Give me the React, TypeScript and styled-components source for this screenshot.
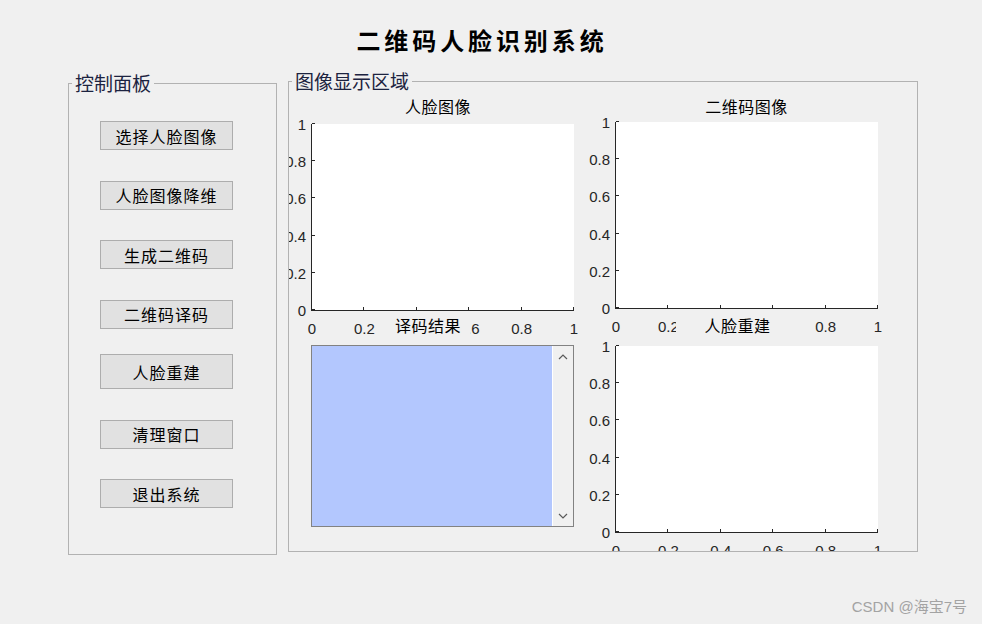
import { Fragment } from "react";
import styled, { createGlobalStyle } from "styled-components";

const GlobalStyle = createGlobalStyle`
  body {
    margin: 0;
    background: #f0f0f0;
  }
`;

const ticks = [0, 0.2, 0.4, 0.6, 0.8, 1];

const buttons = ["选择人脸图像", "人脸图像降维", "生成二维码", "二维码译码", "人脸重建", "清理窗口", "退出系统"];

type ChartProps = {
    title: string;
    gap: number;
    shift?: number;
    padL?: number;
    padR?: number;
    cover?: boolean;
};

const Chart = ({ title, gap, shift = 0, padL = 0, padR = 0, cover = false }: ChartProps) => (
    <Cell>
        <TitleRow>
            <Title $shift={shift} $padL={padL} $padR={padR} $cover={cover}>{title}</Title>
        </TitleRow>
        <Plot $gap={gap}>
            {ticks.map(t => (
                <Fragment key={t}>
                    <TickX style={{ left: `${t * 100}%` }} />
                    <LabelX style={{ left: `${t * 100}%` }}>{t}</LabelX>
                    <TickY style={{ bottom: `${t * 100}%` }} />
                    <LabelY style={{ bottom: `${t * 100}%` }}>{t}</LabelY>
                </Fragment>
            ))}
        </Plot>
    </Cell>
);

const App = () => {
    return (
        <Page>
            <GlobalStyle />
            <Header>二维码人脸识别系统</Header>
            <Main>
                <Panel $w={209} $h={483} $top={2}>
                    <Caption>控制面板</Caption>
                    <ButtonColumn>
                        {buttons.map(b => (
                            <Button key={b} $tall={b === "人脸重建"}>{b}</Button>
                        ))}
                    </ButtonColumn>
                </Panel>
                <Panel $w={630} $h={482}>
                    <Caption>图像显示区域</Caption>
                    <PlotGrid>
                        <Chart title="人脸图像" gap={8} shift={9} />
                        <Chart title="二维码图像" gap={6} />
                        <Cell>
                            <TitleRow>
                                <Title $shift={24} $padL={4} $padR={9} $cover>译码结果</Title>
                            </TitleRow>
                            <ListBox>
                                <ListFill />
                                <ScrollBar>
                                    <svg width="10" height="6" viewBox="0 0 10 6">
                                        <polyline points="1,5 5,1 9,5" fill="none" stroke="#5a5a5a" strokeWidth="1.2" />
                                    </svg>
                                    <svg width="10" height="6" viewBox="0 0 10 6">
                                        <polyline points="1,1 5,5 9,1" fill="none" stroke="#5a5a5a" strokeWidth="1.2" />
                                    </svg>
                                </ScrollBar>
                            </ListBox>
                        </Cell>
                        <Chart title="人脸重建" gap={11} shift={31} padL={28} padR={15} cover />
                    </PlotGrid>
                </Panel>
            </Main>
            <Footer>CSDN @海宝7号</Footer>
        </Page>
    );
};

export default App;

const Page = styled.div`
    width: 982px;
    height: 624px;
    overflow: hidden;
    display: flex;
    flex-direction: column;
    background: #f0f0f0;
`;

const Header = styled.div`
    padding: 23px 18px 0 0;
    height: 34px;
    line-height: 34px;
    text-align: center;
    font-family: "Noto Sans CJK SC", sans-serif;
    font-size: 24px;
    font-weight: 700;
    letter-spacing: 3.9px;
    color: #000;
`;

const Main = styled.div`
    display: flex;
    align-items: flex-start;
    gap: 11px;
    margin-top: 13px;
    padding-left: 68px;
`;

const Panel = styled.fieldset<{ $w: number; $h: number; $top?: number }>`
    box-sizing: border-box;
    width: ${p => p.$w}px;
    height: ${p => p.$h}px;
    min-width: 0;
    margin: ${p => p.$top ?? 0}px 0 0 0;
    padding: 0;
    border: 1px solid #b2b2b2;
`;

const Caption = styled.legend`
    margin-left: 3px;
    padding: 0 3px;
    font-family: "Noto Sans CJK SC", sans-serif;
    font-size: 19px;
    line-height: 22px;
    color: #1c2340;
`;

const ButtonColumn = styled.div`
    display: flex;
    flex-direction: column;
    gap: 30.5px;
    padding: 27px 0 0 31px;
`;

const Button = styled.div<{ $tall: boolean }>`
    box-sizing: border-box;
    width: 133px;
    height: ${p => (p.$tall ? 35 : 29)}px;
    margin-top: ${p => (p.$tall ? -5 : 0)}px;
    display: flex;
    align-items: center;
    justify-content: center;
    background: #e1e1e1;
    border: 1px solid #adadad;
    font-family: "Noto Sans CJK SC", sans-serif;
    font-size: 16px;
    letter-spacing: 1px;
    color: #000;
`;

const PlotGrid = styled.div`
    box-sizing: border-box;
    height: 459px;
    overflow: hidden;
    padding: 4px 0 0 22px;
    display: grid;
    grid-template-columns: 263px 263px;
    grid-template-rows: 219px auto;
    column-gap: 41px;
    align-content: start;
`;

const Cell = styled.div`
    display: flex;
    flex-direction: column;
    width: 263px;
`;

const TitleRow = styled.div`
    display: flex;
    justify-content: center;
    height: 20px;
`;

const Title = styled.div<{ $shift: number; $padL: number; $padR: number; $cover: boolean }>`
    position: relative;
    z-index: 1;
    margin-right: ${p => p.$shift}px;
    padding: 0 ${p => p.$padR}px 0 ${p => p.$padL}px;
    background: ${p => (p.$cover ? "#f0f0f0" : "transparent")};
    font-family: "Noto Sans CJK SC", sans-serif;
    font-size: 16px;
    letter-spacing: 0.5px;
    line-height: 20px;
    white-space: nowrap;
    color: #000;
`;

const Plot = styled.div<{ $gap: number }>`
    position: relative;
    box-sizing: border-box;
    width: 263px;
    height: 187px;
    margin-top: ${p => p.$gap}px;
    background: #fff;
    border-left: 1px solid #262626;
    border-bottom: 1px solid #262626;
`;

const TickX = styled.div`
    position: absolute;
    bottom: 0;
    width: 1px;
    height: 3px;
    margin-left: -1px;
    background: #262626;
`;

const TickY = styled.div`
    position: absolute;
    left: 0;
    width: 3px;
    height: 1px;
    background: #262626;
`;

const LabelX = styled.div`
    position: absolute;
    top: calc(100% + 10px);
    transform: translateX(-50%);
    font-family: "Liberation Sans", Arial, sans-serif;
    font-size: 15px;
    line-height: 17px;
    color: #262626;
    white-space: nowrap;
`;

const LabelY = styled.div`
    position: absolute;
    right: calc(100% + 6px);
    transform: translateY(50%);
    font-family: "Liberation Sans", Arial, sans-serif;
    font-size: 15px;
    line-height: 17px;
    color: #262626;
    white-space: nowrap;
`;

const ListBox = styled.div`
    box-sizing: border-box;
    width: 263px;
    height: 182px;
    margin-top: 10px;
    display: flex;
    border: 1px solid #828282;
`;

const ListFill = styled.div`
    flex: 1;
    background: #b3c7fe;
`;

const ScrollBar = styled.div`
    width: 20px;
    display: flex;
    flex-direction: column;
    justify-content: space-between;
    align-items: center;
    padding: 8px 0 7px;
    border-left: 1px solid #fff;
    background: #f0f0f0;
`;

const Footer = styled.div`
    margin-top: auto;
    padding: 0 15px 7px 0;
    text-align: right;
    font-family: "Liberation Sans", "Noto Sans CJK SC", sans-serif;
    font-size: 15px;
    line-height: 20px;
    color: #a3a3a3;
`;
